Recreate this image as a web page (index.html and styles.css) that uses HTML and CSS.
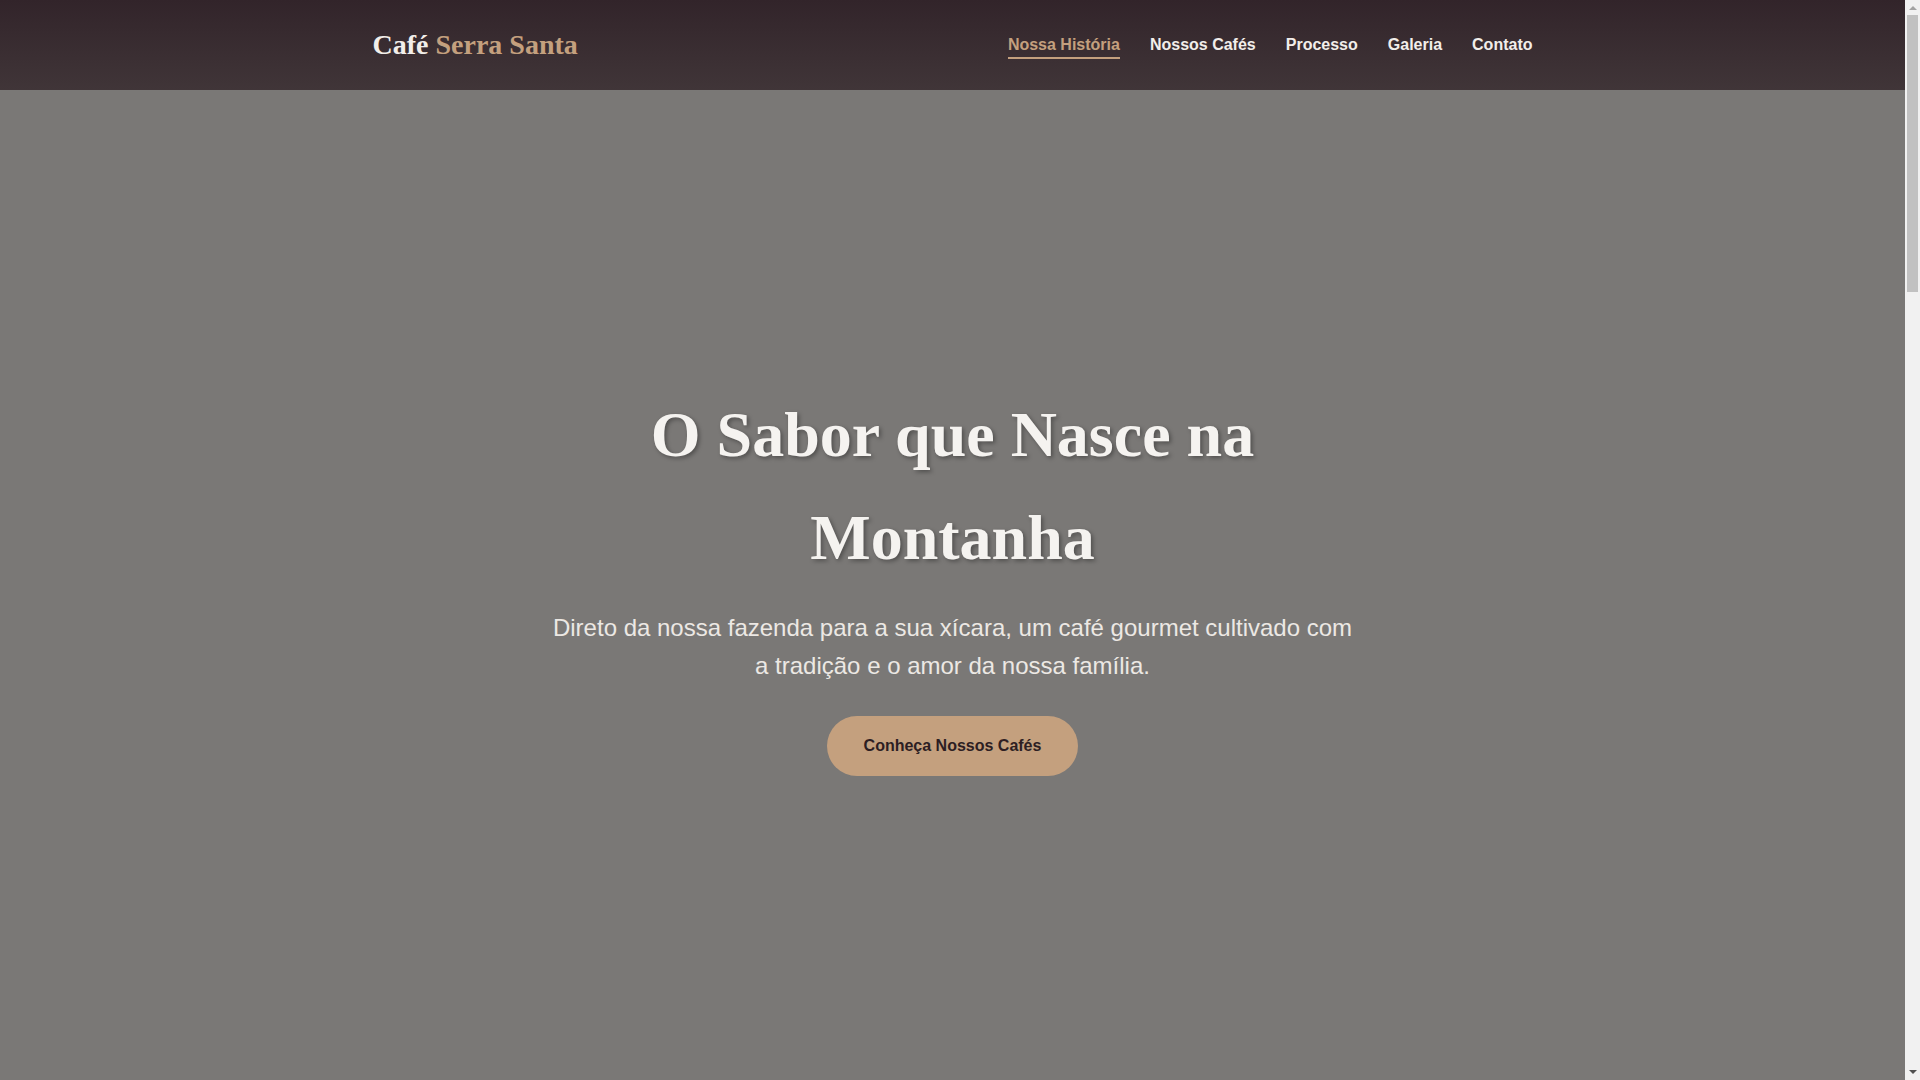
FILE: index.html
```html
<!DOCTYPE html>
<html lang="pt-BR">
<head>
<meta charset="utf-8">
<title>Café Serra Santa</title>
<link rel="stylesheet" href="styles.css">
</head>
<body>
<header class="site-header">
  <div class="container header-inner">
    <a class="logo" href="#">Café <span class="logo-accent">Serra Santa</span></a>
    <nav class="main-nav">
      <a class="nav-link active" href="#historia">Nossa História</a>
      <a class="nav-link" href="#cafes">Nossos Cafés</a>
      <a class="nav-link" href="#processo">Processo</a>
      <a class="nav-link" href="#galeria">Galeria</a>
      <a class="nav-link" href="#contato">Contato</a>
    </nav>
  </div>
</header>
<main>
  <section class="hero">
    <div class="hero-content">
      <h1 class="hero-title">O Sabor que Nasce na Montanha</h1>
      <p class="hero-text">Direto da nossa fazenda para a sua xícara, um café gourmet cultivado com a tradição e o amor da nossa família.</p>
      <a class="btn" href="#cafes">Conheça Nossos Cafés</a>
    </div>
  </section>
  <section class="section" id="historia"></section>
  <section class="section section-alt" id="cafes"></section>
  <section class="section" id="processo"></section>
  <section class="section section-alt" id="galeria"></section>
</main>
<footer class="site-footer" id="contato"></footer>
<div class="scrollbar" aria-hidden="true">
  <span class="scroll-arrow scroll-up"></span>
  <span class="scroll-thumb"></span>
  <span class="scroll-arrow scroll-down"></span>
</div>
</body>
</html>
```
FILE: styles.css
```css
* { box-sizing: border-box; }
html, body { margin: 0; padding: 0; }
body {
  font-family: "Liberation Sans", Arial, sans-serif;
  background: #7a7876;
  color: #f3f0ec;
  padding-right: 15px;
}
a { text-decoration: none; color: inherit; }

.container {
  max-width: 1200px;
  margin: 0 auto;
  padding: 0 20px;
}

.site-header {
  height: 90px;
  background: linear-gradient(180deg, #32242a 0%, #403538 100%);
}
.header-inner {
  height: 100%;
  display: flex;
  align-items: center;
  justify-content: space-between;
}
.logo {
  font-family: "Liberation Serif", "Times New Roman", serif;
  font-weight: 700;
  font-size: 28px;
  color: #f2eeea;
}
.logo-accent { color: #c4a07e; }

.main-nav {
  display: flex;
  gap: 30px;
}
.nav-link {
  position: relative;
  font-size: 16px;
  font-weight: 700;
  color: #f2eeea;
}
.nav-link.active { color: #c4a07e; }
.nav-link.active::after {
  content: "";
  position: absolute;
  left: 0;
  right: 0;
  bottom: -5px;
  height: 2px;
  background: #c4a07e;
}

.hero {
  min-height: 990px;
  background: #7a7876;
  display: flex;
  align-items: center;
  justify-content: center;
  padding-bottom: 10px;
  text-align: center;
}
.hero-content {
  max-width: 800px;
  display: flex;
  flex-direction: column;
  align-items: center;
}
.hero-title {
  margin: 0 0 20px;
  font-family: "Liberation Serif", "Times New Roman", serif;
  font-weight: 700;
  font-size: 64px;
  line-height: 1.6;
  color: #f5f3f0;
  text-shadow: 2px 2px 4px rgba(0, 0, 0, 0.35);
}
.hero-text {
  margin: 0 0 30px;
  font-size: 24px;
  line-height: 1.6;
  color: #ece8e4;
}
.btn {
  display: inline-block;
  padding: 21px 37px;
  border-radius: 40px;
  background: #c4a07e;
  color: #2d1e23;
  font-size: 16px;
  font-weight: 700;
  line-height: 18px;
}

.section {
  min-height: 700px;
  background: #f7f3ee;
}
.section-alt { background: #efe7de; }

.site-footer {
  height: 210px;
  background: #33252a;
}

.scrollbar {
  position: fixed;
  top: 0;
  right: 0;
  width: 15px;
  height: 100vh;
  background: #f1f1f1;
  display: flex;
  flex-direction: column;
  align-items: center;
}
.scroll-arrow {
  width: 0;
  height: 0;
  border-left: 4px solid transparent;
  border-right: 4px solid transparent;
}
.scroll-up {
  margin-top: 6px;
  border-bottom: 4px solid #a3a3a3;
}
.scroll-thumb {
  margin-top: 5px;
  width: 11px;
  height: 277px;
  background: #c1c1c1;
}
.scroll-down {
  margin-top: auto;
  margin-bottom: 6px;
  border-top: 4px solid #505050;
}
```
